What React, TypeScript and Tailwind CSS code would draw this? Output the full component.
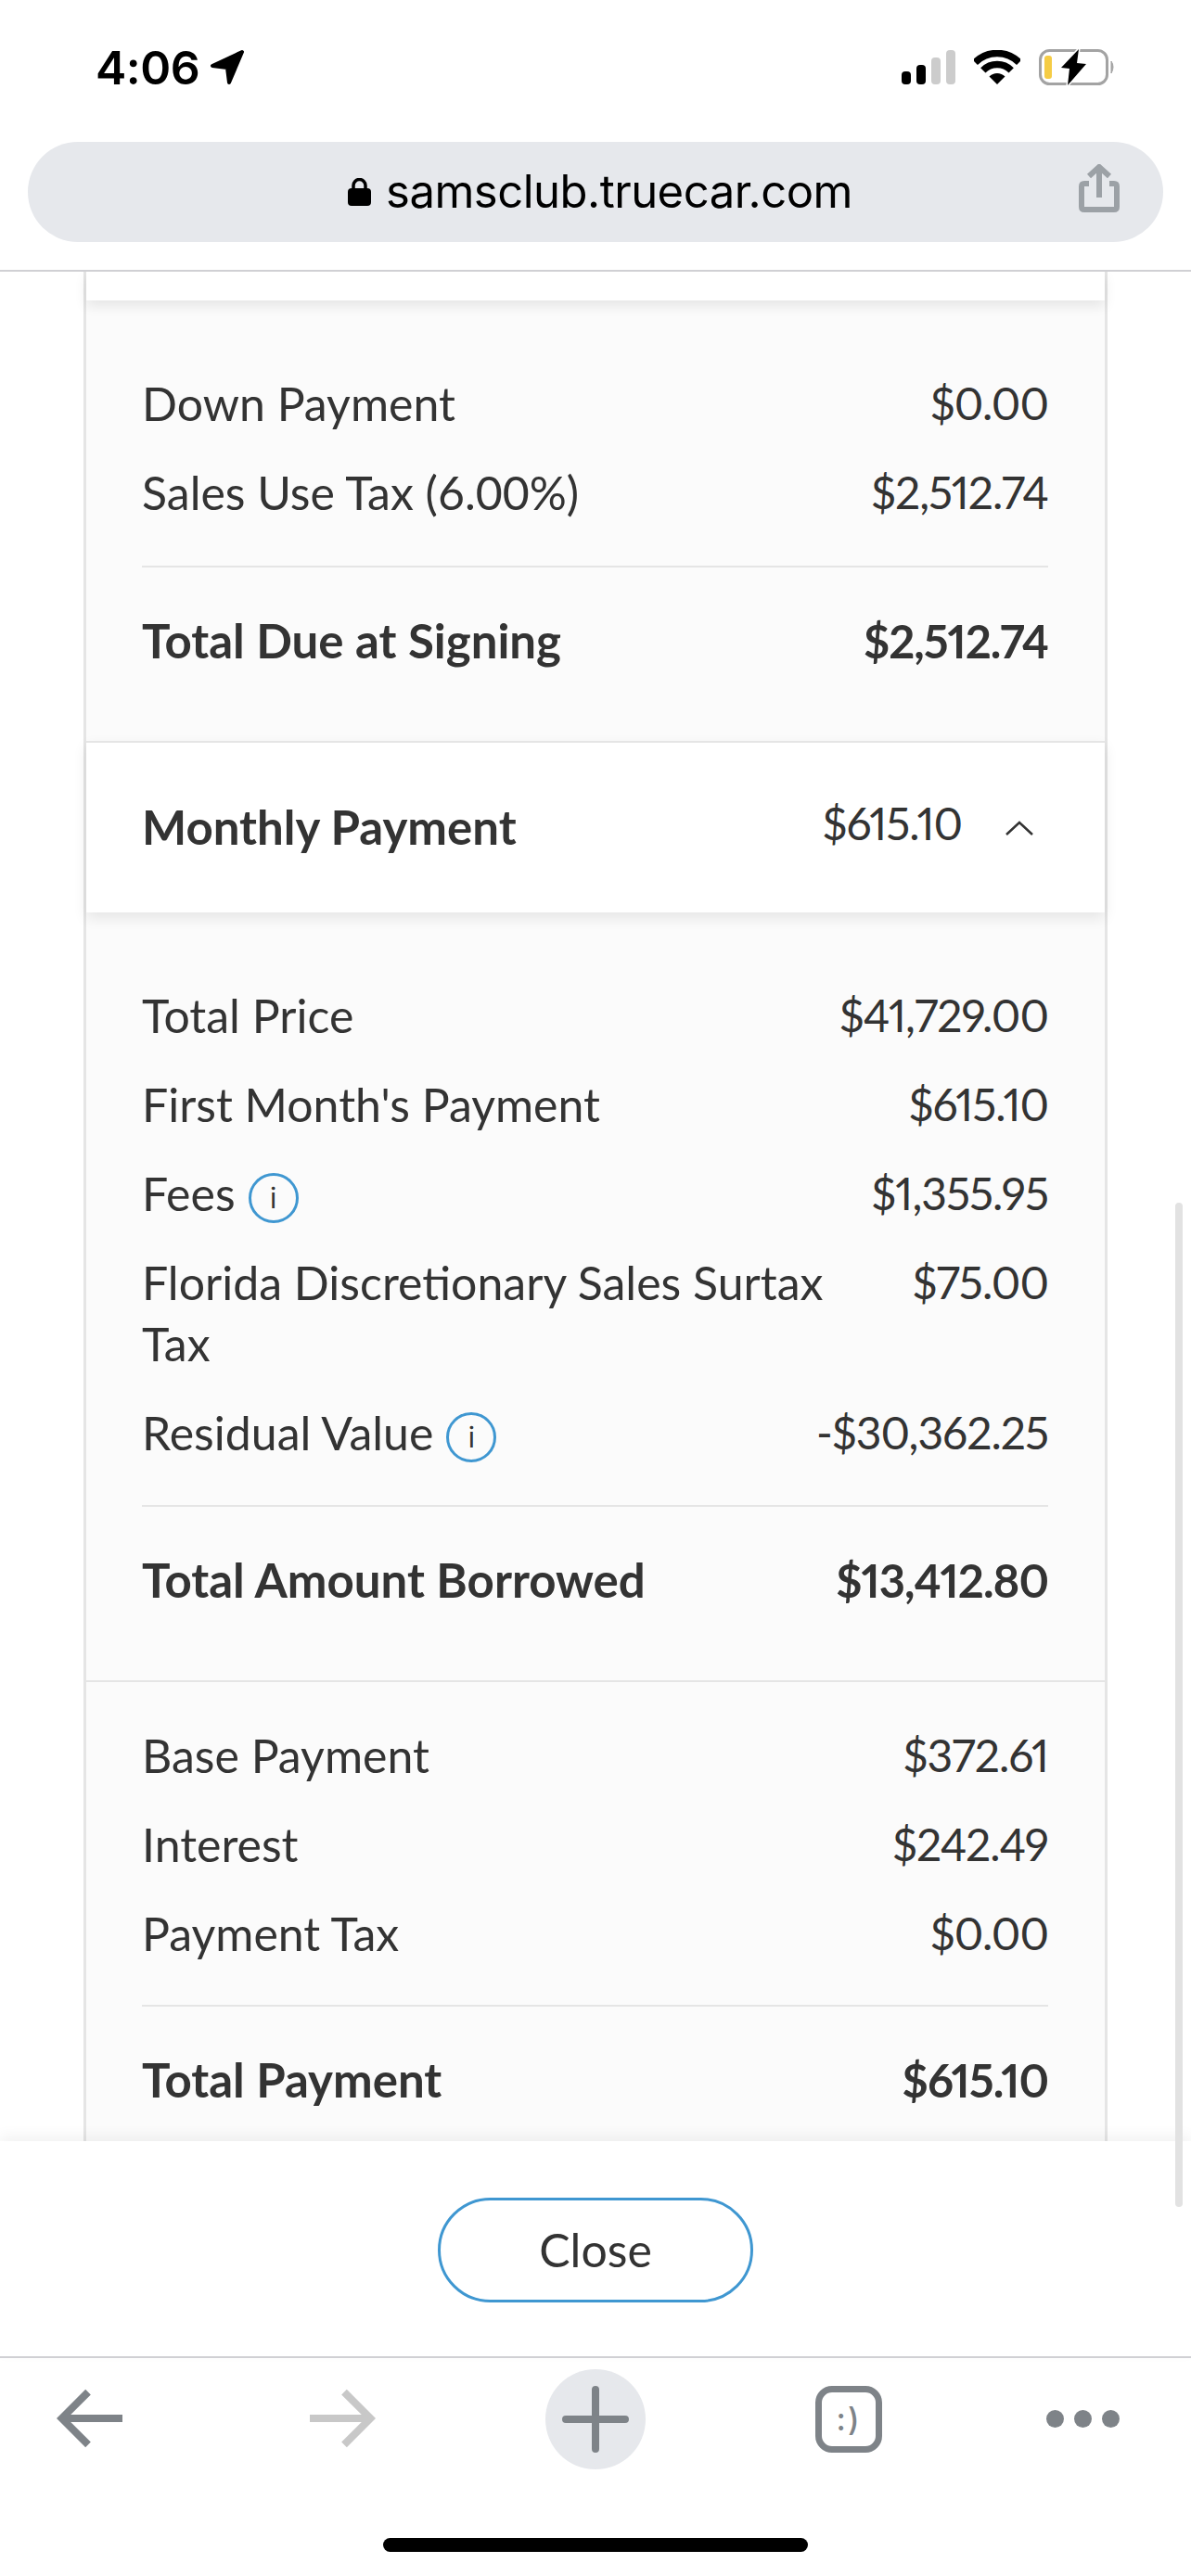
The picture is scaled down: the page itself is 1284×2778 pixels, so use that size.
import React from "react";

const F = "font-['Lato',sans-serif]";

function Info() {
  return (
    <span className="inline-flex flex-none items-center justify-center w-[54px] h-[54px] rounded-full border-[3px] border-[#3f97d1] ml-[14px] mt-[10px] text-[#333] text-[30px] leading-none font-['Inter',sans-serif] font-normal">
      i
    </span>
  );
}

function Row({ label, value, info }: { label: string; value: string; info?: boolean }) {
  return (
    <div className="flex justify-between gap-[40px] py-[15px] leading-[66px] text-[50px] text-[#333]">
      <div className="max-w-[770px] flex items-center flex-wrap">
        <span>{label}</span>
        {info && <Info />}
      </div>
      <div className="flex-none text-right whitespace-nowrap text-[48px] proportional-nums tracking-[-1px]">{value}</div>
    </div>
  );
}

function Total({ label, value, className }: { label: string; value: string; className: string }) {
  return (
    <div className={`border-t-2 border-[#e5e5e5] pt-[31px] flex justify-between leading-[96px] text-[51px] font-bold text-[#333] ${className}`}>
      <span>{label}</span>
      <span className="text-[49px] proportional-nums tracking-[-1px]">{value}</span>
    </div>
  );
}

function StatusBar() {
  return (
    <div className="h-[153px] flex-none flex justify-between pl-[103px] pr-[82px] pt-[53px]">
      <div className="flex items-start gap-[10px]">
        <span className="font-['Inter',sans-serif] font-semibold text-[50px] leading-[40px] text-black tracking-[-0.5px]">4:06</span>
        <svg width="40" height="40" viewBox="0 0 40 40">
          <path d="M36 3 L4 18 L20 20 L22 36 Z" fill="#000" stroke="#000" strokeWidth="4" strokeLinejoin="round" />
        </svg>
      </div>
      <div className="flex items-start">
        <svg width="58" height="38" viewBox="0 0 58 38" className="mt-[1px] mr-[20px]">
          <rect x="0" y="23" width="10" height="14" rx="4" fill="#000" />
          <rect x="16" y="16" width="10" height="21" rx="4" fill="#000" />
          <rect x="32" y="8" width="10" height="29" rx="4" fill="#ccc" />
          <rect x="48" y="0" width="10" height="37" rx="4" fill="#ccc" />
        </svg>
        <svg width="50" height="38" viewBox="0 0 50 38" className="mt-[1px] mr-[20px]">
          <path d="M1.3 13.3 A33.5 33.5 0 0 1 48.7 13.3" fill="none" stroke="#000" strokeWidth="7.5" />
          <path d="M9.8 21.8 A21.5 21.5 0 0 1 40.2 21.8" fill="none" stroke="#000" strokeWidth="7.5" />
          <path d="M25 37 L16.5 28.5 A12 12 0 0 1 33.5 28.5 Z" fill="#000" />
        </svg>
        <svg width="82" height="40" viewBox="0 0 82 40">
          <rect x="1.5" y="1.5" width="72" height="36" rx="10" fill="none" stroke="#a3a3a3" strokeWidth="3" />
          <rect x="6" y="7" width="8" height="25" rx="3" fill="#f5cc45" />
          <path d="M78 13 Q82 19 78 26 Z" fill="#a3a3a3" stroke="#a3a3a3" strokeWidth="1" />
          <path d="M43 0 L24 20 L33 21 L31 39 L51 16 L41 15 Z" fill="#000" stroke="#fff" strokeWidth="3" paintOrder="stroke" />
        </svg>
      </div>
    </div>
  );
}

function UrlBar() {
  return (
    <div className="flex-none pb-[30px] border-b-2 border-[#d0d0d4] bg-white">
      <div className="relative mx-[30px] h-[108px] rounded-[54px] bg-[#e6e8ec] flex items-center justify-center pl-[10px]">
        <svg width="25" height="30" viewBox="0 0 25 30" className="mr-[16px]">
          <path d="M6 13 V8 a6.5 6.5 0 0 1 13 0 V13" fill="none" stroke="#000" strokeWidth="3.5" />
          <rect x="0" y="11" width="25" height="19" rx="4" fill="#000" />
        </svg>
        <span className="font-['Inter',sans-serif] text-[49px] leading-none text-black tracking-[-0.5px] -mt-[2px]">samsclub.truecar.com</span>
        <svg width="44" height="54" viewBox="0 0 44 54" className="absolute right-[47px] top-[24px]">
          <path d="M11 21 H6 Q3 21 3 24 V46 Q3 49 6 49 H38 Q41 49 41 46 V24 Q41 21 38 21 H33" fill="none" stroke="#9ca1a6" strokeWidth="6" />
          <path d="M22 36 V3 M11 13 L22 3 L33 13" fill="none" stroke="#9ca1a6" strokeWidth="6" />
        </svg>
      </div>
    </div>
  );
}

function Content() {
  return (
    <div className={`relative flex-1 min-h-0 overflow-hidden bg-white ${F}`}>
      <div className="mx-[90px] border-x-[3px] border-[#e5e5e5] bg-[#fbfbfb]">
        <div className="relative z-10 h-[31px] bg-white shadow-[0_6px_14px_rgba(0,0,0,0.09)]" />
        <div className="pl-[60px] pr-[61px] pt-[63px] pb-[60px]">
          <Row label="Down Payment" value="$0.00" />
          <Row label="Sales Use Tax (6.00%)" value="$2,512.74" />
          <Total label="Total Due at Signing" value="$2,512.74" className="mt-[31px]" />
        </div>
        <div className="relative z-10 h-[185px] border-t-2 border-[#e5e5e5] bg-white shadow-[0_6px_14px_rgba(0,0,0,0.09)] pl-[60px] pr-[76px] flex items-center justify-between text-[#333]">
          <span className="text-[51px] font-bold">Monthly Payment</span>
          <span className="flex items-center text-[48px] proportional-nums tracking-[-1px]">
            <span className="-mt-[10px]">$615.10</span>
            <svg width="32" height="18" viewBox="0 0 32 18" className="ml-[46px]">
              <path d="M2 16 L16 3 L30 16" fill="none" stroke="#333" strokeWidth="2.5" />
            </svg>
          </span>
        </div>
        <div className="pl-[60px] pr-[61px] pt-[63px] pb-[60px]">
          <Row label="Total Price" value="$41,729.00" />
          <Row label="First Month's Payment" value="$615.10" />
          <Row label="Fees" value="$1,355.95" info />
          <Row label="Florida Discretionary Sales Surtax Tax" value="$75.00" />
          <Row label="Residual Value" value="-$30,362.25" info />
          <Total label="Total Amount Borrowed" value="$13,412.80" className="mt-[30px]" />
        </div>
        <div className="border-t-2 border-[#e5e5e5] pl-[60px] pr-[61px] pt-[31px] pb-[60px]">
          <Row label="Base Payment" value="$372.61" />
          <Row label="Interest" value="$242.49" />
          <Row label="Payment Tax" value="$0.00" />
          <Total label="Total Payment" value="$615.10" className="mt-[29px]" />
        </div>
      </div>
    </div>
  );
}

function Footer() {
  return (
    <div className={`relative z-20 flex-none h-[234px] bg-white border-b-2 border-[#d0d0d4] flex items-start justify-center pt-[61px] shadow-[0_-6px_14px_rgba(0,0,0,0.05)] ${F}`}>
      <div className="w-[340px] h-[113px] rounded-full border-[3px] border-[#3f97d1] flex items-center justify-center text-[50px] text-[#333]">
        Close
      </div>
    </div>
  );
}

function Toolbar() {
  return (
    <div className="relative flex-none h-[235px] bg-white">
      <div className="h-[121px] pt-[12px] pl-[61px] flex items-start">
        <svg width="72" height="66" viewBox="0 0 72 66" className="mt-[21px]">
          <path d="M34 3.6 L5.6 32 L34 60.4 M8 32 H71" fill="none" stroke="#7e8388" strokeWidth="8" />
        </svg>
        <svg width="72" height="66" viewBox="0 0 72 66" className="ml-[200px] mt-[21px]">
          <path d="M38 3.6 L66.4 32 L38 60.4 M64 32 H1" fill="none" stroke="#c8c8c8" strokeWidth="8" />
        </svg>
        <div className="ml-[183px] w-[108px] h-[108px] rounded-full bg-[#e6e8ec] flex items-center justify-center">
          <svg width="72" height="72" viewBox="0 0 72 72">
            <path d="M36 4 V68 M4 36 H68" fill="none" stroke="#7e8388" strokeWidth="8" strokeLinecap="round" />
          </svg>
        </div>
        <div className="ml-[183px] mt-[18px] w-[72px] h-[72px] rounded-[18px] border-[7px] border-[#7e8388] flex items-center justify-center text-[34px] leading-none text-[#7e8388] tracking-[2px] font-medium font-['Inter',sans-serif]">
          :)
        </div>
        <div className="ml-[177px] mt-[44px] flex gap-[11px]">
          <div className="w-[19px] h-[19px] rounded-full bg-[#7e8388]" />
          <div className="w-[19px] h-[19px] rounded-full bg-[#7e8388]" />
          <div className="w-[19px] h-[19px] rounded-full bg-[#7e8388]" />
        </div>
      </div>
      <div className="mx-auto mt-[73px] w-[458px] h-[15px] rounded-full bg-black" />
    </div>
  );
}

export default function App() {
  return (
    <div className="relative w-[1284px] h-[2778px] bg-white overflow-hidden flex flex-col">
      <StatusBar />
      <UrlBar />
      <Content />
      <Footer />
      <Toolbar />
      <div className="absolute left-[1267px] top-[1297px] w-[8px] h-[1083px] rounded-full bg-[#e2e2e2] z-30" />
    </div>
  );
}
